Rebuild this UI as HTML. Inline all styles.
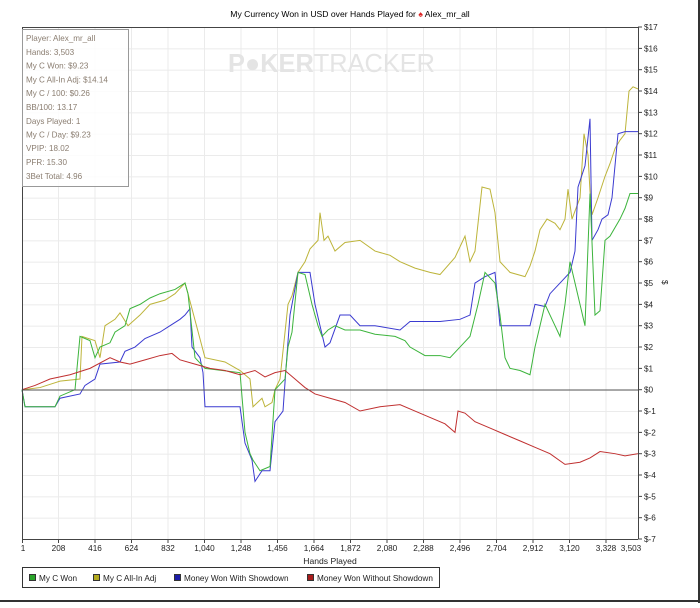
<!DOCTYPE html>
<html><head><meta charset="utf-8"><style>
body{margin:0;width:700px;height:603px;background:#fff;overflow:hidden;font-family:"Liberation Sans",sans-serif}
</style></head><body>
<svg width="700" height="603" xmlns="http://www.w3.org/2000/svg" font-family="Liberation Sans, sans-serif">
<defs>
<pattern id="hp" patternUnits="userSpaceOnUse" x="0" y="27" width="700" height="21.333">
<line x1="0" y1="0.5" x2="700" y2="0.5" stroke="#ebebeb" stroke-width="1"/>
</pattern>
</defs>
<rect x="0" y="0" width="700" height="603" fill="#fff"/>
<line x1="0" y1="601" x2="700" y2="601" stroke="#333" stroke-width="2"/>
<line x1="699" y1="0" x2="699" y2="603" stroke="#333" stroke-width="2"/>
<text x="350" y="17" font-size="8.6" text-anchor="middle" fill="#000">My Currency Won in USD over Hands Played for <tspan fill="#d22">♠</tspan> Alex_mr_all</text>
<rect x="22" y="27" width="616" height="512" fill="url(#hp)"/>
<g stroke="#ebebeb" stroke-width="1">
<line x1="58.5" y1="27" x2="58.5" y2="539"/><line x1="95" y1="27" x2="95" y2="539"/><line x1="131.5" y1="27" x2="131.5" y2="539"/><line x1="168" y1="27" x2="168" y2="539"/><line x1="204.5" y1="27" x2="204.5" y2="539"/><line x1="241" y1="27" x2="241" y2="539"/><line x1="277.5" y1="27" x2="277.5" y2="539"/><line x1="314" y1="27" x2="314" y2="539"/><line x1="350.5" y1="27" x2="350.5" y2="539"/><line x1="387" y1="27" x2="387" y2="539"/><line x1="423.5" y1="27" x2="423.5" y2="539"/><line x1="460" y1="27" x2="460" y2="539"/><line x1="496.5" y1="27" x2="496.5" y2="539"/><line x1="533" y1="27" x2="533" y2="539"/><line x1="569.5" y1="27" x2="569.5" y2="539"/><line x1="606" y1="27" x2="606" y2="539"/>
</g>
<text x="228" y="72" font-size="26" font-weight="bold" fill="#e4e4e4" textLength="207" lengthAdjust="spacingAndGlyphs">P<tspan>●</tspan>KER<tspan font-weight="normal">TRACKER</tspan></text>
<g transform="translate(0,389.7) scale(1,-21.33)" fill="none" stroke-width="1">
<polyline vector-effect="non-scaling-stroke" stroke="#bdb43a" points="22,0 40,0.1 60,0.4 80,0.5 82,2.5 95,2.3 100,1.5 105,3 115,3.3 120,3.6 128,3 140,3.5 150,4 165,4.2 175,4.5 185,5 188,4.5 205,1.5 225,1.3 240,0.9 250,0.5 253,-0.8 262,-0.4 265,-0.8 272,-0.6 275,0 280,0.5 288,4 292,4.4 298,5.5 305,6 310,6.6 318,7 320,8.3 324,7 328,7.2 335,6.5 345,6.9 360,7 375,6.5 390,6.3 400,6 415,5.7 430,5.5 440,5.4 455,6.2 465,7.2 470,6 475,6.5 482,9.5 490,9.4 495,8.3 500,6 510,5.5 525,5.3 530,5.8 535,6.5 540,7.5 547,8 555,7.8 560,7.5 565,8 568,9.4 572,8 580,9 584,12 588,11 590,9.3 592,8.2 598,9 605,10 610,10.6 615,11.3 620,11.7 625,12 629,14 633,14.2 638,14.1"/>
<polyline vector-effect="non-scaling-stroke" stroke="#3a3ad0" points="22,0 25,-0.8 55,-0.8 60,-0.4 80,-0.2 85,0.2 95,0.5 100,1.2 120,1.3 125,1.8 135,2 145,2.4 160,2.7 170,3 180,3.3 185,3.5 190,3.8 192,2 200,1.5 203,0.8 205,-0.8 240,-0.8 245,-2.5 252,-3.3 255,-4.3 262,-3.8 270,-3.8 275,-1.5 283,-1 286,1 290,3.5 298,5.5 310,5.5 315,4 320,3 325,2 330,2.2 340,3.5 350,3.5 360,3 370,3 375,3 400,2.8 410,3.2 440,3.2 460,3.3 470,3.5 475,5 485,5.3 495,5.5 500,3 505,3 530,3 535,4 545,3.9 550,4.5 560,5 570,5.5 575,6.5 578,9.5 585,10.5 590,12.7 592,7 598,7.5 602,8 608,8.2 612,9 618,12 625,12.1 638,12.1"/>
<polyline vector-effect="non-scaling-stroke" stroke="#3cb43c" points="22,0 25,-0.8 55,-0.8 60,-0.3 75,0 80,2.5 90,2.3 95,1.5 100,2 110,2.2 115,2.7 125,3 130,3.8 140,4 150,4.3 160,4.5 175,4.7 185,5 188,4.5 195,1.5 205,1 240,0.8 245,-2 250,-3 253,-3.3 260,-3.8 270,-3.6 275,0 285,0.5 288,2 292,2.7 298,5.5 305,5.4 312,4 318,3 322,2.5 328,2.8 335,3 345,2.8 360,2.8 375,2.6 395,2.5 405,2.3 410,2 425,1.6 440,1.6 450,1.5 460,2 470,2.5 478,4 485,5.5 495,5 500,3.5 505,1.5 510,1 520,0.9 530,0.7 535,2 540,3 545,4 555,3 560,2.5 565,4 570,6 575,5 580,4 585,3 590,9.2 595,3.5 600,3.7 605,7 610,7.2 620,8 625,8.5 630,9.2 638,9.2"/>
<polyline vector-effect="non-scaling-stroke" stroke="#c03030" points="22,0 35,0.2 50,0.5 70,0.7 90,1 110,1.5 120,1.3 130,1.2 145,1.4 160,1.6 172,1.7 180,1.4 195,1.2 210,1 225,0.9 240,0.7 255,0.9 265,0.6 275,0.8 285,0.9 295,0.5 305,0.1 315,-0.2 330,-0.4 345,-0.6 360,-1 380,-0.8 400,-0.7 415,-1 430,-1.3 445,-1.6 455,-2 458,-1 465,-1.1 475,-1.5 490,-1.8 505,-2.1 520,-2.4 535,-2.7 550,-3 565,-3.5 580,-3.4 590,-3.2 600,-2.9 615,-3 625,-3.1 638,-3"/>
</g>
<line x1="22" y1="390" x2="638" y2="390" stroke="#555"/>
<line x1="22.5" y1="27" x2="22.5" y2="539" stroke="#444"/>
<line x1="22" y1="539.5" x2="638" y2="539.5" stroke="#444"/>
<line x1="638.5" y1="27" x2="638.5" y2="539" stroke="#444"/>
<line x1="22" y1="27.5" x2="638" y2="27.5" stroke="#444"/>
<rect x="22.5" y="29.5" width="106" height="157" fill="#fff" fill-opacity="0.85" stroke="#999"/>
<g font-size="8.1" fill="#8a7d70">
<text x="26" y="41">Player: Alex_mr_all</text><text x="26" y="55">Hands: 3,503</text><text x="26" y="68.5">My C Won: $9.23</text><text x="26" y="82.5">My C All-In Adj: $14.14</text><text x="26" y="96">My C / 100: $0.26</text><text x="26" y="110">BB/100: 13.17</text><text x="26" y="124">Days Played: 1</text><text x="26" y="137.5">My C / Day: $9.23</text><text x="26" y="151">VPIP: 18.02</text><text x="26" y="165">PFR: 15.30</text><text x="26" y="179">3Bet Total: 4.96</text>
</g>
<g stroke="#444">
<line x1="638" x2="642" y1="27" y2="27"/><line x1="638" x2="642" y1="48.4" y2="48.4"/><line x1="638" x2="642" y1="69.7" y2="69.7"/><line x1="638" x2="642" y1="91" y2="91"/><line x1="638" x2="642" y1="112.4" y2="112.4"/><line x1="638" x2="642" y1="133.7" y2="133.7"/><line x1="638" x2="642" y1="155" y2="155"/><line x1="638" x2="642" y1="176.4" y2="176.4"/><line x1="638" x2="642" y1="197.7" y2="197.7"/><line x1="638" x2="642" y1="219" y2="219"/><line x1="638" x2="642" y1="240.4" y2="240.4"/><line x1="638" x2="642" y1="261.7" y2="261.7"/><line x1="638" x2="642" y1="283" y2="283"/><line x1="638" x2="642" y1="304.4" y2="304.4"/><line x1="638" x2="642" y1="325.7" y2="325.7"/><line x1="638" x2="642" y1="347" y2="347"/><line x1="638" x2="642" y1="368.4" y2="368.4"/><line x1="638" x2="642" y1="389.7" y2="389.7"/><line x1="638" x2="642" y1="411" y2="411"/><line x1="638" x2="642" y1="432.4" y2="432.4"/><line x1="638" x2="642" y1="453.7" y2="453.7"/><line x1="638" x2="642" y1="475" y2="475"/><line x1="638" x2="642" y1="496.4" y2="496.4"/><line x1="638" x2="642" y1="517.7" y2="517.7"/><line x1="638" x2="642" y1="539" y2="539"/>
<line x1="22.5" x2="22.5" y1="539" y2="543"/><line x1="58.5" x2="58.5" y1="539" y2="543"/><line x1="95" x2="95" y1="539" y2="543"/><line x1="131.5" x2="131.5" y1="539" y2="543"/><line x1="168" x2="168" y1="539" y2="543"/><line x1="204.5" x2="204.5" y1="539" y2="543"/><line x1="241" x2="241" y1="539" y2="543"/><line x1="277.5" x2="277.5" y1="539" y2="543"/><line x1="314" x2="314" y1="539" y2="543"/><line x1="350.5" x2="350.5" y1="539" y2="543"/><line x1="387" x2="387" y1="539" y2="543"/><line x1="423.5" x2="423.5" y1="539" y2="543"/><line x1="460" x2="460" y1="539" y2="543"/><line x1="496.5" x2="496.5" y1="539" y2="543"/><line x1="533" x2="533" y1="539" y2="543"/><line x1="569.5" x2="569.5" y1="539" y2="543"/><line x1="606" x2="606" y1="539" y2="543"/>
</g>
<g font-size="8.2" fill="#222">
<text x="644" y="30">$17</text><text x="644" y="51.4">$16</text><text x="644" y="72.7">$15</text><text x="644" y="94">$14</text><text x="644" y="115.4">$13</text><text x="644" y="136.7">$12</text><text x="644" y="158">$11</text><text x="644" y="179.4">$10</text><text x="644" y="200.7">$9</text><text x="644" y="222">$8</text><text x="644" y="243.4">$7</text><text x="644" y="264.7">$6</text><text x="644" y="286">$5</text><text x="644" y="307.4">$4</text><text x="644" y="328.7">$3</text><text x="644" y="350">$2</text><text x="644" y="371.4">$1</text><text x="644" y="392.7">$0</text><text x="644" y="414">$-1</text><text x="644" y="435.4">$-2</text><text x="644" y="456.7">$-3</text><text x="644" y="478">$-4</text><text x="644" y="499.4">$-5</text><text x="644" y="520.7">$-6</text><text x="644" y="542">$-7</text>
</g>
<g font-size="8.2" fill="#222" text-anchor="middle">
<text x="23" y="551">1</text><text x="58.5" y="551">208</text><text x="95" y="551">416</text><text x="131.5" y="551">624</text><text x="168" y="551">832</text><text x="204.5" y="551">1,040</text><text x="241" y="551">1,248</text><text x="277.5" y="551">1,456</text><text x="314" y="551">1,664</text><text x="350.5" y="551">1,872</text><text x="387" y="551">2,080</text><text x="423.5" y="551">2,288</text><text x="460" y="551">2,496</text><text x="496.5" y="551">2,704</text><text x="533" y="551">2,912</text><text x="569.5" y="551">3,120</text><text x="606" y="551">3,328</text><text x="631" y="551">3,503</text>
</g>
<text x="662" y="280" font-size="8.2" fill="#222" transform="rotate(90 662 280)">$</text>
<text x="330" y="564" font-size="8.6" fill="#222" text-anchor="middle">Hands Played</text>
<rect x="22.5" y="567.5" width="417" height="20" fill="#fff" stroke="#333"/>
<g font-size="8.2" fill="#222">
<rect x="29.5" y="574.5" width="6" height="6" fill="#2aa52a" stroke="#333"/><text x="39" y="581">My C Won</text>
<rect x="93.5" y="574.5" width="6" height="6" fill="#b3aa1e" stroke="#333"/><text x="103" y="581">My C All-In Adj</text>
<rect x="174.5" y="574.5" width="6" height="6" fill="#1c1ca8" stroke="#333"/><text x="184" y="581">Money Won With Showdown</text>
<rect x="307.5" y="574.5" width="6" height="6" fill="#a81c1c" stroke="#333"/><text x="317" y="581">Money Won Without Showdown</text>
</g>
</svg>
</body></html>
